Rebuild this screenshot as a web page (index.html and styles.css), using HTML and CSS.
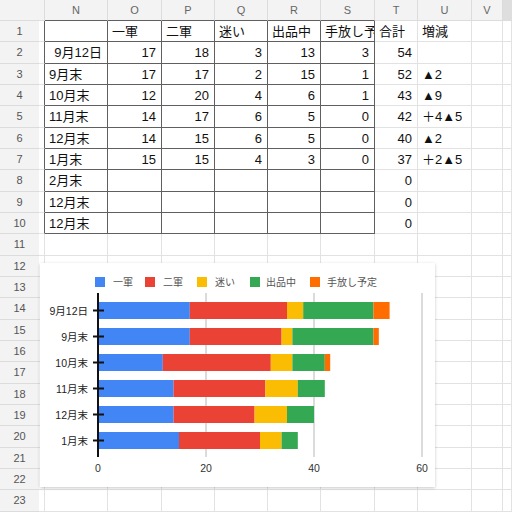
FILE: index.html
```html
<!DOCTYPE html>
<html lang="ja">

<head>
  <meta charset="UTF-8" />
  <title>在庫推移</title>
  <link rel="stylesheet" href="styles.css">
</head>

<body>
  <div class="sheet">
    <!-- column headers -->
    <div class="h corner"></div>
    <div class="h hb">N</div><div class="h hb">O</div><div class="h hb">P</div><div class="h hb">Q</div><div class="h hb">R</div><div class="h hb">S</div>
    <div class="h">T</div><div class="h">U</div><div class="h">V</div><div class="h end"></div>

    <div class="rn">1</div><div class="m e"></div>
    <div class="c t"></div><div class="c t">一軍</div><div class="c t">二軍</div><div class="c t">迷い</div><div class="c t">出品中</div><div class="c t">手放し予定</div>
    <div class="c">合計</div><div class="c">増減</div><div class="c"></div><div class="c"></div>

    <div class="rn">2</div><div class="m e"></div>
    <div class="c t num">9月12日</div><div class="c t num">17</div><div class="c t num">18</div><div class="c t num">3</div><div class="c t num">13</div><div class="c t num">3</div>
    <div class="c num">54</div><div class="c"></div><div class="c"></div><div class="c"></div>

    <div class="rn">3</div><div class="m e"></div>
    <div class="c t">9月末</div><div class="c t num">17</div><div class="c t num">17</div><div class="c t num">2</div><div class="c t num">15</div><div class="c t num">1</div>
    <div class="c num">52</div><div class="c">▲2</div><div class="c"></div><div class="c"></div>

    <div class="rn">4</div><div class="m e"></div>
    <div class="c t">10月末</div><div class="c t num">12</div><div class="c t num">20</div><div class="c t num">4</div><div class="c t num">6</div><div class="c t num">1</div>
    <div class="c num">43</div><div class="c">▲9</div><div class="c"></div><div class="c"></div>

    <div class="rn">5</div><div class="m e"></div>
    <div class="c t">11月末</div><div class="c t num">14</div><div class="c t num">17</div><div class="c t num">6</div><div class="c t num">5</div><div class="c t num">0</div>
    <div class="c num">42</div><div class="c">＋4▲5</div><div class="c"></div><div class="c"></div>

    <div class="rn">6</div><div class="m e"></div>
    <div class="c t">12月末</div><div class="c t num">14</div><div class="c t num">15</div><div class="c t num">6</div><div class="c t num">5</div><div class="c t num">0</div>
    <div class="c num">40</div><div class="c">▲2</div><div class="c"></div><div class="c"></div>

    <div class="rn">7</div><div class="m e"></div>
    <div class="c t">1月末</div><div class="c t num">15</div><div class="c t num">15</div><div class="c t num">4</div><div class="c t num">3</div><div class="c t num">0</div>
    <div class="c num">37</div><div class="c">＋2▲5</div><div class="c"></div><div class="c"></div>

    <div class="rn">8</div><div class="m e"></div>
    <div class="c t">2月末</div><div class="c t"></div><div class="c t"></div><div class="c t"></div><div class="c t"></div><div class="c t"></div>
    <div class="c num">0</div><div class="c"></div><div class="c"></div><div class="c"></div>

    <div class="rn">9</div><div class="m e"></div>
    <div class="c t">12月末</div><div class="c t"></div><div class="c t"></div><div class="c t"></div><div class="c t"></div><div class="c t"></div>
    <div class="c num">0</div><div class="c"></div><div class="c"></div><div class="c"></div>

    <div class="rn">10</div><div class="m e"></div>
    <div class="c t">12月末</div><div class="c t"></div><div class="c t"></div><div class="c t"></div><div class="c t"></div><div class="c t"></div>
    <div class="c num">0</div><div class="c"></div><div class="c"></div><div class="c"></div>

    <!-- empty rows under the chart -->
    <div class="rn">11</div><div class="m"></div><div class="c"></div><div class="c"></div><div class="c"></div><div class="c"></div><div class="c"></div><div class="c"></div><div class="c"></div><div class="c"></div><div class="c"></div><div class="c"></div>
    <div class="rn">12</div><div class="m"></div><div class="c"></div><div class="c"></div><div class="c"></div><div class="c"></div><div class="c"></div><div class="c"></div><div class="c"></div><div class="c"></div><div class="c"></div><div class="c"></div>
    <div class="rn">13</div><div class="m"></div><div class="c"></div><div class="c"></div><div class="c"></div><div class="c"></div><div class="c"></div><div class="c"></div><div class="c"></div><div class="c"></div><div class="c"></div><div class="c"></div>
    <div class="rn">14</div><div class="m"></div><div class="c"></div><div class="c"></div><div class="c"></div><div class="c"></div><div class="c"></div><div class="c"></div><div class="c"></div><div class="c"></div><div class="c"></div><div class="c"></div>
    <div class="rn">15</div><div class="m"></div><div class="c"></div><div class="c"></div><div class="c"></div><div class="c"></div><div class="c"></div><div class="c"></div><div class="c"></div><div class="c"></div><div class="c"></div><div class="c"></div>
    <div class="rn">16</div><div class="m"></div><div class="c"></div><div class="c"></div><div class="c"></div><div class="c"></div><div class="c"></div><div class="c"></div><div class="c"></div><div class="c"></div><div class="c"></div><div class="c"></div>
    <div class="rn">17</div><div class="m"></div><div class="c"></div><div class="c"></div><div class="c"></div><div class="c"></div><div class="c"></div><div class="c"></div><div class="c"></div><div class="c"></div><div class="c"></div><div class="c"></div>
    <div class="rn">18</div><div class="m"></div><div class="c"></div><div class="c"></div><div class="c"></div><div class="c"></div><div class="c"></div><div class="c"></div><div class="c"></div><div class="c"></div><div class="c"></div><div class="c"></div>
    <div class="rn">19</div><div class="m"></div><div class="c"></div><div class="c"></div><div class="c"></div><div class="c"></div><div class="c"></div><div class="c"></div><div class="c"></div><div class="c"></div><div class="c"></div><div class="c"></div>
    <div class="rn">20</div><div class="m"></div><div class="c"></div><div class="c"></div><div class="c"></div><div class="c"></div><div class="c"></div><div class="c"></div><div class="c"></div><div class="c"></div><div class="c"></div><div class="c"></div>
    <div class="rn">21</div><div class="m"></div><div class="c"></div><div class="c"></div><div class="c"></div><div class="c"></div><div class="c"></div><div class="c"></div><div class="c"></div><div class="c"></div><div class="c"></div><div class="c"></div>
    <div class="rn">22</div><div class="m"></div><div class="c"></div><div class="c"></div><div class="c"></div><div class="c"></div><div class="c"></div><div class="c"></div><div class="c"></div><div class="c"></div><div class="c"></div><div class="c"></div>
    <div class="rn">23</div><div class="m"></div><div class="c"></div><div class="c"></div><div class="c"></div><div class="c"></div><div class="c"></div><div class="c"></div><div class="c"></div><div class="c"></div><div class="c"></div><div class="c"></div>
  </div>

  <!-- floating chart over the sheet -->
  <div class="chart">
    <svg width="395" height="224" viewBox="0 0 395 224">
      <g class="legend">
        <rect x="55" y="14" width="10" height="10" fill="#4285f4" />
        <text x="73" y="23">一軍</text>
        <rect x="105" y="14" width="10" height="10" fill="#ea4335" />
        <text x="123" y="23">二軍</text>
        <rect x="157" y="14" width="10" height="10" fill="#fbbc04" />
        <text x="175" y="23">迷い</text>
        <rect x="210" y="14" width="10" height="10" fill="#34a853" />
        <text x="226" y="23">出品中</text>
        <rect x="270" y="14" width="10" height="10" fill="#ff6d01" />
        <text x="287" y="23">手放し予定</text>
      </g>

      <g class="grid">
        <line x1="166" y1="30" x2="166" y2="194" />
        <line x1="274" y1="30" x2="274" y2="194" />
        <line x1="382" y1="30" x2="382" y2="194" />
      </g>

      <!-- 1 unit = 5.4px, zero at x=58 -->
      <g class="bar">
        <rect x="58" y="39" width="91.8" height="17" fill="#4285f4" />
        <rect x="149.8" y="39" width="97.2" height="17" fill="#ea4335" />
        <rect x="247" y="39" width="16.2" height="17" fill="#fbbc04" />
        <rect x="263.2" y="39" width="70.2" height="17" fill="#34a853" />
        <rect x="333.4" y="39" width="16.2" height="17" fill="#ff6d01" />
      </g>
      <g class="bar">
        <rect x="58" y="65" width="91.8" height="17" fill="#4285f4" />
        <rect x="149.8" y="65" width="91.8" height="17" fill="#ea4335" />
        <rect x="241.6" y="65" width="10.8" height="17" fill="#fbbc04" />
        <rect x="252.4" y="65" width="81" height="17" fill="#34a853" />
        <rect x="333.4" y="65" width="5.4" height="17" fill="#ff6d01" />
      </g>
      <g class="bar">
        <rect x="58" y="91" width="64.8" height="17" fill="#4285f4" />
        <rect x="122.8" y="91" width="108" height="17" fill="#ea4335" />
        <rect x="230.8" y="91" width="21.6" height="17" fill="#fbbc04" />
        <rect x="252.4" y="91" width="32.4" height="17" fill="#34a853" />
        <rect x="284.8" y="91" width="5.4" height="17" fill="#ff6d01" />
      </g>
      <g class="bar">
        <rect x="58" y="117" width="75.6" height="17" fill="#4285f4" />
        <rect x="133.6" y="117" width="91.8" height="17" fill="#ea4335" />
        <rect x="225.4" y="117" width="32.4" height="17" fill="#fbbc04" />
        <rect x="257.8" y="117" width="27" height="17" fill="#34a853" />
      </g>
      <g class="bar">
        <rect x="58" y="143" width="75.6" height="17" fill="#4285f4" />
        <rect x="133.6" y="143" width="81" height="17" fill="#ea4335" />
        <rect x="214.6" y="143" width="32.4" height="17" fill="#fbbc04" />
        <rect x="247" y="143" width="27" height="17" fill="#34a853" />
      </g>
      <g class="bar">
        <rect x="58" y="169" width="81" height="17" fill="#4285f4" />
        <rect x="139" y="169" width="81" height="17" fill="#ea4335" />
        <rect x="220" y="169" width="21.6" height="17" fill="#fbbc04" />
        <rect x="241.6" y="169" width="16.2" height="17" fill="#34a853" />
      </g>

      <g class="axis">
        <line x1="58" y1="30" x2="58" y2="194" />
        <line x1="53" y1="47.5" x2="64" y2="47.5" />
        <line x1="53" y1="73.5" x2="64" y2="73.5" />
        <line x1="53" y1="99.5" x2="64" y2="99.5" />
        <line x1="53" y1="125.5" x2="64" y2="125.5" />
        <line x1="53" y1="151.5" x2="64" y2="151.5" />
        <line x1="53" y1="177.5" x2="64" y2="177.5" />
      </g>

      <g class="cats">
        <text x="48" y="51.5">9月12日</text>
        <text x="48" y="77.5">9月末</text>
        <text x="48" y="103.5">10月末</text>
        <text x="48" y="129.5">11月末</text>
        <text x="48" y="155.5">12月末</text>
        <text x="48" y="181.5">1月末</text>
      </g>

      <g class="ticks">
        <text x="58" y="209">0</text>
        <text x="166" y="209">20</text>
        <text x="274" y="209">40</text>
        <text x="382" y="209">60</text>
      </g>
    </svg>
  </div>
</body>

</html>
```

FILE: styles.css
```css
body {
  margin: 0;
  font-family: 'Liberation Sans', 'Noto Sans CJK JP', sans-serif;
  font-size: 13px;
  color: #111;
  background: #fff;
  position: relative;
  overflow: hidden;
  height: 512px;
}

/* spreadsheet grid */
.sheet {
  display: grid;
  grid-template-columns: 39px 6px 63px 54px 53px 53px 53px 54px 43px 54px 31px 1fr;
  grid-template-rows: 21px repeat(23, 21.33px);
  width: 512px;
}

.sheet > div {
  box-sizing: border-box;
  border-right: 1px solid #e2e2e2;
  border-bottom: 1px solid #e2e2e2;
  white-space: nowrap;
  overflow: hidden;
}

.h {
  background: #f3f3f3;
  color: #666;
  font-size: 11px;
  text-align: center;
  line-height: 20px;
  border-color: #dcdcdc !important;
}

.corner {
  grid-column: span 2;
}

.h.hb {
  border-bottom-color: #5f5f5f !important;
}

.h.end {
  background: #dedede;
  border-right: none !important;
}

.rn {
  background: #f3f3f3;
  color: #555;
  font-size: 11px;
  text-align: center;
  line-height: 21px;
  border-right: none !important;
  border-bottom-color: #dcdcdc !important;
}

.m.e {
  border-right-color: #5f5f5f;
}

.c {
  padding: 0 4px;
  line-height: 21px;
}

.c.t {
  border-right-color: #5f5f5f;
  border-bottom-color: #5f5f5f;
}

.c.num {
  text-align: right;
  padding-right: 5px;
}

.c:nth-child(12n) {
  border-right: none;
}

/* chart overlay */
.chart {
  position: absolute;
  left: 40px;
  top: 263px;
  width: 395px;
  height: 224px;
  background: #fff;
  box-shadow: 0 1px 3px rgba(0, 0, 0, 0.22);
}

.chart svg {
  display: block;
}

.legend text {
  font-size: 10px;
  fill: #555;
}

.grid line {
  stroke: #cfcfcf;
  stroke-width: 1.5;
}

.axis line {
  stroke: #111;
  stroke-width: 2;
}

.cats text {
  font-size: 10.5px;
  fill: #222;
  text-anchor: end;
}

.ticks text {
  font-size: 10.5px;
  fill: #333;
  text-anchor: middle;
}
```
